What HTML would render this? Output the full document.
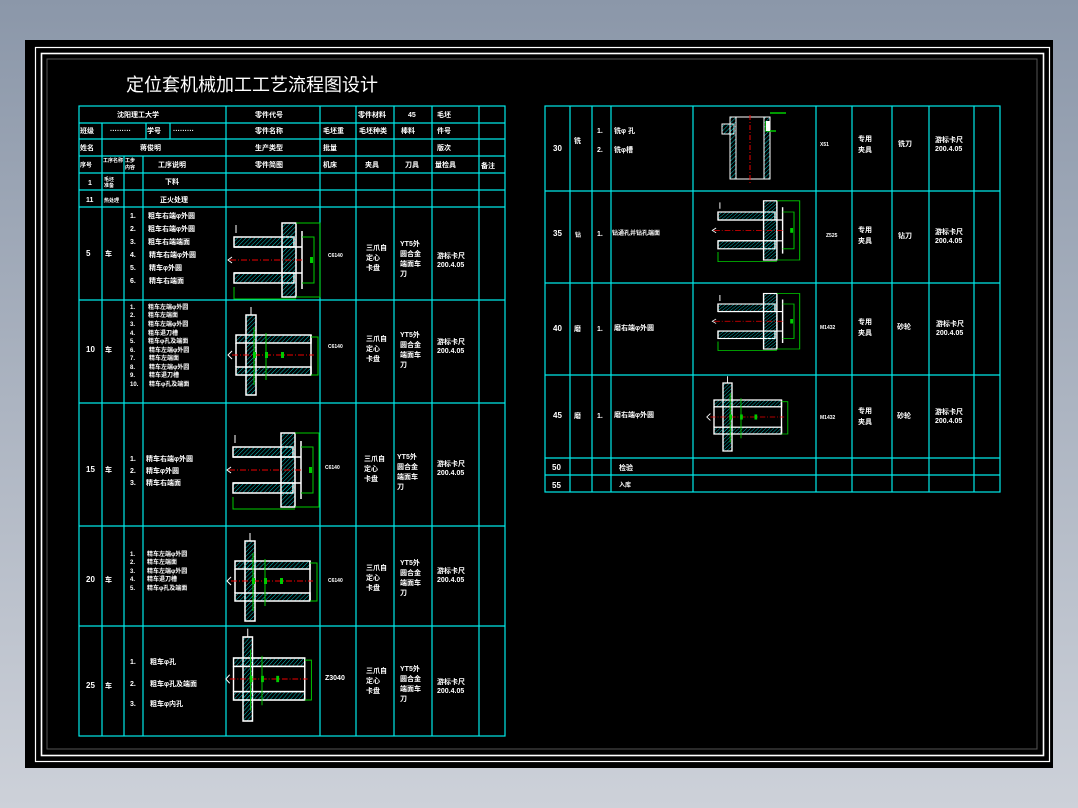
<!DOCTYPE html>
<html><head><meta charset="utf-8"><style>
html,body{margin:0;padding:0;}
body{width:1078px;height:808px;background:linear-gradient(#8b97a9,#cdd1d9);overflow:hidden;}
svg{display:block}
text{font-family:"Liberation Sans","Noto Sans CJK SC",sans-serif;fill:#fff;font-weight:bold;}
</style></head><body>
<svg width="1078" height="808" viewBox="0 0 1078 808" xmlns="http://www.w3.org/2000/svg">
<defs>
<pattern id="h" width="3" height="3" patternUnits="userSpaceOnUse" patternTransform="rotate(45)">
<line x1="0" y1="0" x2="0" y2="3" stroke="#00d8d8" stroke-width="0.9"/>
</pattern>
<g id="sleeve">
 <rect x="0" y="0" width="60" height="10" fill="url(#h)" stroke="#fff" stroke-width="1.5"/>
 <rect x="0" y="36" width="60" height="10" fill="url(#h)" stroke="#fff" stroke-width="1.5"/>
 <rect x="48" y="-14" width="14" height="74" fill="url(#h)" stroke="#fff" stroke-width="1.5"/>
 <line x1="0" y1="10" x2="68" y2="10" stroke="#fff" stroke-width="1.5"/>
 <line x1="0" y1="36" x2="68" y2="36" stroke="#fff" stroke-width="1.5"/>
 <line x1="68" y1="-6" x2="68" y2="52" stroke="#fff" stroke-width="1.5"/>
 <line x1="-4" y1="23" x2="70" y2="23" stroke="#e00" stroke-width="1" stroke-dasharray="6,2,1,2"/>
 <path d="M62 -14 H86 V60 H62 M68 0 H80 V46 H68 M0 50 V62 H62" fill="none" stroke="#0c0" stroke-width="1"/>
 <rect x="76" y="20" width="3" height="6" fill="#0c0"/>
 <path d="M-2 20 l-4 3 l4 3 M2 -4 v-8" stroke="#fff" fill="none" stroke-width="1"/>
</g>
<g id="sleeveL">
 <rect x="0" y="-20" width="10" height="80" fill="url(#h)" stroke="#fff" stroke-width="1.5"/>
 <rect x="-10" y="0" width="75" height="8" fill="url(#h)" stroke="#fff" stroke-width="1.5"/>
 <rect x="-10" y="32" width="75" height="8" fill="url(#h)" stroke="#fff" stroke-width="1.5"/>
 <line x1="-10" y1="8" x2="-10" y2="32" stroke="#fff" stroke-width="1.5"/>
 <line x1="65" y1="0" x2="65" y2="40" stroke="#fff" stroke-width="1.5"/>
 <line x1="-14" y1="20" x2="68" y2="20" stroke="#e00" stroke-width="1" stroke-dasharray="6,2,1,2"/>
 <path d="M8 -8 V50 M20 -2 V45 M65 2 H72 V40 H65" fill="none" stroke="#0c0" stroke-width="1"/>
 <rect x="7" y="17" width="3" height="6" fill="#0c0"/><rect x="19" y="17" width="3" height="6" fill="#0c0"/><rect x="35" y="17" width="3" height="6" fill="#0c0"/>
 <path d="M-14 16 l-4 4 l4 4 M5 -20 v-8" stroke="#fff" fill="none" stroke-width="1"/>
</g>
</defs>
<rect x="25" y="40" width="1028" height="728" fill="#000"/>
<rect x="35.5" y="47.5" width="1014" height="714" fill="none" stroke="#fff" stroke-width="1.2"/>
<rect x="41.5" y="53.5" width="1002" height="702" fill="none" stroke="#fff" stroke-width="1.6"/>
<rect x="47" y="59" width="990" height="690" fill="none" stroke="#555" stroke-width="1"/>
<text x="126" y="91" font-size="18" style="font-weight:normal">定位套机械加工工艺流程图设计</text>

<g stroke="#00e8e8" stroke-width="1.2" fill="none">
<rect x="79" y="106" width="426" height="630"/>
<path d="M79 123H505M79 139H505M79 156H505M79 173H505M79 190H505M79 207H505M79 300H505M79 403H505M79 526H505M79 626H505"/>
<path d="M226 106V736M320 106V736M356 106V736M394 106V736M432 106V736M479 106V736"/>
<path d="M102 123V139M102 156V736M146 123V139M170 123V139M102 139V156M124 156V736M143 156V736"/>
<rect x="545" y="106" width="455" height="386"/>
<path d="M545 191H1000M545 283H1000M545 375H1000M545 458H1000M545 475H1000"/>
<path d="M570 106V492M592 106V492M611 106V492M693 106V492M816 106V492M852 106V492M892 106V492M929 106V492M974 106V492"/>
</g>

<g font-size="7">
<text x="117" y="117">沈阳理工大学</text><text x="255" y="117">零件代号</text><text x="358" y="117">零件材料</text><text x="408" y="117">45</text><text x="437" y="117">毛坯</text>
<text x="80" y="133">班级</text><text x="110" y="133">·········</text><text x="147" y="133">学号</text><text x="173" y="133">·········</text><text x="255" y="133">零件名称</text><text x="323" y="133">毛坯重</text><text x="359" y="133">毛坯种类</text><text x="401" y="133">棒料</text><text x="437" y="133">件号</text>
<text x="80" y="150">姓名</text><text x="140" y="150">蒋俊明</text><text x="255" y="150">生产类型</text><text x="323" y="150">批量</text><text x="437" y="150">版次</text>
<text x="80" y="167" font-size="6">序号</text><text x="103" y="162" font-size="5">工序名称</text><text x="125" y="162" font-size="5">工步</text><text x="125" y="169" font-size="5">内容</text><text x="158" y="167">工序说明</text><text x="255" y="167">零件简图</text><text x="323" y="167">机床</text><text x="365" y="167">夹具</text><text x="405" y="167">刀具</text><text x="435" y="167">量检具</text><text x="481" y="168">备注</text>
<text x="88" y="185">1</text><text x="104" y="181" font-size="5">毛坯</text><text x="104" y="187" font-size="5">准备</text><text x="165" y="184">下料</text>
<text x="86" y="202">11</text><text x="104" y="202" font-size="5">热处理</text><text x="160" y="202">正火处理</text>

<text x="86" y="256" font-size="8">5</text><text x="105" y="256">车</text>
<text x="130" y="218">1.</text><text x="130" y="231">2.</text><text x="130" y="244">3.</text><text x="130" y="257">4.</text><text x="130" y="270">5.</text><text x="130" y="283">6.</text>
<text x="148" y="218">粗车右端φ外圆</text><text x="148" y="231">粗车右端φ外圆</text><text x="148" y="244">粗车右端端面</text><text x="149" y="257">精车右端φ外圆</text><text x="149" y="270">精车φ外圆</text><text x="149" y="283">精车右端面</text>
<text x="328" y="257" font-size="5">C6140</text><text x="366" y="250">三爪自</text><text x="366" y="260">定心</text><text x="366" y="270">卡盘</text><text x="400" y="246">YT5外</text><text x="400" y="256">圆合金</text><text x="400" y="266">端面车</text><text x="400" y="276">刀</text><text x="437" y="258">游标卡尺</text><text x="437" y="267">200.4.05</text>

<text x="86" y="352" font-size="8">10</text><text x="105" y="352">车</text>
<g font-size="6"><text x="130" y="309">1.</text><text x="130" y="317">2.</text><text x="130" y="326">3.</text><text x="130" y="335">4.</text><text x="130" y="343">5.</text><text x="130" y="352">6.</text><text x="130" y="360">7.</text><text x="130" y="369">8.</text><text x="130" y="377">9.</text><text x="130" y="386">10.</text>
<text x="148" y="309">粗车左端φ外圆</text><text x="148" y="317">粗车左端面</text><text x="148" y="326">粗车左端φ外圆</text><text x="148" y="335">粗车退刀槽</text><text x="148" y="343">粗车φ孔及端面</text><text x="149" y="352">精车左端φ外圆</text><text x="149" y="360">精车左端面</text><text x="149" y="369">精车左端φ外圆</text><text x="149" y="377">精车退刀槽</text><text x="149" y="386">精车φ孔及端面</text></g>
<text x="328" y="348" font-size="5">C6140</text><text x="366" y="341">三爪自</text><text x="366" y="351">定心</text><text x="366" y="361">卡盘</text><text x="400" y="337">YT5外</text><text x="400" y="347">圆合金</text><text x="400" y="357">端面车</text><text x="400" y="367">刀</text><text x="437" y="344">游标卡尺</text><text x="437" y="353">200.4.05</text>

<text x="86" y="472" font-size="8">15</text><text x="105" y="472">车</text>
<text x="130" y="461">1.</text><text x="130" y="473">2.</text><text x="130" y="485">3.</text><text x="146" y="461">精车右端φ外圆</text><text x="146" y="473">精车φ外圆</text><text x="146" y="485">精车右端面</text>
<text x="325" y="469" font-size="5">C6140</text><text x="364" y="461">三爪自</text><text x="364" y="471">定心</text><text x="364" y="481">卡盘</text><text x="397" y="459">YT5外</text><text x="397" y="469">圆合金</text><text x="397" y="479">端面车</text><text x="397" y="489">刀</text><text x="437" y="466">游标卡尺</text><text x="437" y="475">200.4.05</text>

<text x="86" y="582" font-size="8">20</text><text x="105" y="582">车</text>
<g font-size="6"><text x="130" y="556">1.</text><text x="130" y="564">2.</text><text x="130" y="573">3.</text><text x="130" y="581">4.</text><text x="130" y="590">5.</text>
<text x="147" y="556">精车左端φ外圆</text><text x="147" y="564">精车左端面</text><text x="147" y="573">精车左端φ外圆</text><text x="147" y="581">精车退刀槽</text><text x="147" y="590">精车φ孔及端面</text></g>
<text x="328" y="582" font-size="5">C6140</text><text x="366" y="570">三爪自</text><text x="366" y="580">定心</text><text x="366" y="590">卡盘</text><text x="400" y="565">YT5外</text><text x="400" y="575">圆合金</text><text x="400" y="585">端面车</text><text x="400" y="595">刀</text><text x="437" y="573">游标卡尺</text><text x="437" y="582">200.4.05</text>

<text x="86" y="688" font-size="8">25</text><text x="105" y="688">车</text>
<text x="130" y="664">1.</text><text x="130" y="686">2.</text><text x="130" y="706">3.</text><text x="150" y="664">粗车φ孔</text><text x="150" y="686">粗车φ孔及端面</text><text x="150" y="706">粗车φ内孔</text>
<text x="325" y="680">Z3040</text><text x="366" y="673">三爪自</text><text x="366" y="683">定心</text><text x="366" y="693">卡盘</text><text x="400" y="671">YT5外</text><text x="400" y="681">圆合金</text><text x="400" y="691">端面车</text><text x="400" y="701">刀</text><text x="437" y="684">游标卡尺</text><text x="437" y="693">200.4.05</text>

<text x="553" y="151" font-size="8">30</text><text x="574" y="143">铣</text><text x="597" y="133">1.</text><text x="597" y="152">2.</text><text x="614" y="133">铣φ 孔</text><text x="614" y="152">铣φ槽</text>
<text x="820" y="146" font-size="5">X51</text><text x="858" y="141">专用</text><text x="858" y="152">夹具</text><text x="898" y="146">铣刀</text><text x="935" y="142">游标卡尺</text><text x="935" y="151">200.4.05</text>
<text x="553" y="236" font-size="8">35</text><text x="575" y="237" font-size="6">钻</text><text x="597" y="236">1.</text><text x="612" y="235" font-size="6">钻通孔并钻孔端面</text>
<text x="826" y="237" font-size="5">Z525</text><text x="858" y="232">专用</text><text x="858" y="243">夹具</text><text x="898" y="238">钻刀</text><text x="935" y="234">游标卡尺</text><text x="935" y="243">200.4.05</text>
<text x="553" y="331" font-size="8">40</text><text x="574" y="331">磨</text><text x="597" y="331">1.</text><text x="614" y="330">磨右端φ外圆</text>
<text x="820" y="329" font-size="5">M1432</text><text x="858" y="324">专用</text><text x="858" y="335">夹具</text><text x="897" y="329">砂轮</text><text x="936" y="326">游标卡尺</text><text x="936" y="335">200.4.05</text>
<text x="553" y="418" font-size="8">45</text><text x="574" y="418">磨</text><text x="597" y="418">1.</text><text x="614" y="417">磨右端φ外圆</text>
<text x="820" y="419" font-size="5">M1432</text><text x="858" y="413">专用</text><text x="858" y="424">夹具</text><text x="897" y="418">砂轮</text><text x="935" y="414">游标卡尺</text><text x="935" y="423">200.4.05</text>
<text x="552" y="470" font-size="8">50</text><text x="619" y="470">检验</text>
<text x="552" y="488" font-size="8">55</text><text x="619" y="487" font-size="6">入库</text>
</g>

<use href="#sleeve" transform="translate(234,237)"/>
<use href="#sleeveL" transform="translate(246,335)"/>
<use href="#sleeve" transform="translate(233,447)"/>
<use href="#sleeveL" transform="translate(245,561)"/>
<use href="#sleeveL" transform="translate(243,658) scale(0.95,1.05)"/>
<g transform="translate(736,117)">
<rect x="-14" y="7" width="12" height="10" fill="url(#h)" stroke="#fff"/>
<rect x="-6" y="0" width="6" height="62" fill="url(#h)" stroke="#fff"/>
<rect x="28" y="0" width="6" height="62" fill="url(#h)" stroke="#fff"/>
<rect x="0" y="0" width="28" height="62" fill="none" stroke="#fff"/>
<line x1="14" y1="-2" x2="14" y2="66" stroke="#e00" stroke-dasharray="5,2,1,2"/>
<path d="M34 -4 H50 M30 4 V14 H40" stroke="#0c0" fill="none" stroke-width="1.5"/>
<rect x="30" y="4" width="4" height="10" fill="#fff"/>
</g>
<use href="#sleeve" transform="translate(718,212) scale(0.95,0.8)"/>
<use href="#sleeve" transform="translate(718,304) scale(0.95,0.75)"/>
<use href="#sleeveL" transform="translate(723,400) scale(0.9,0.85)"/>
</svg>
</body></html>
